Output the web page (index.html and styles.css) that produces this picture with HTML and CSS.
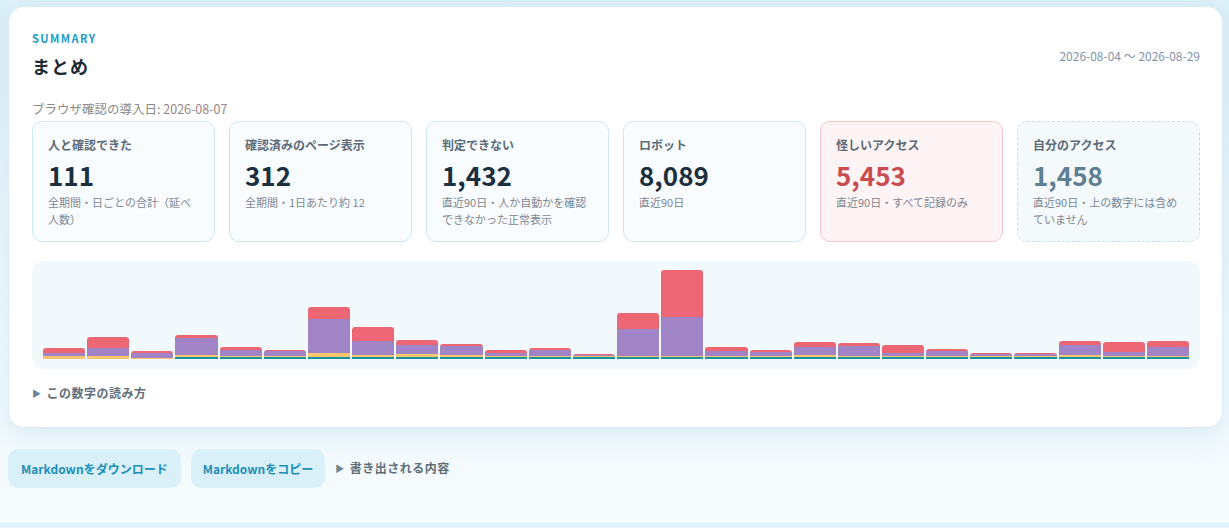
FILE: index.html
```html
<!DOCTYPE html>
<html lang="ja">

<head>
    <meta charset="UTF-8">
    <meta name="viewport" content="width=device-width, initial-scale=1.0">
    <title>まとめ</title>
    <link rel="stylesheet" href="styles.css">
</head>

<body>
    <div class="page">
        <section class="summary-card">
            <div class="summary-head">
                <div>
                    <div class="eyebrow">SUMMARY</div>
                    <h2>まとめ</h2>
                </div>
                <div class="range">2026-08-04 〜 2026-08-29</div>
            </div>

            <p class="since">ブラウザ確認の導入日: <span>2026-08-07</span></p>

            <div class="stats">
                <div class="stat">
                    <div class="stat-label">人と確認できた</div>
                    <div class="stat-value">111</div>
                    <div class="stat-note">全期間・日ごとの合計（延べ人数）</div>
                </div>
                <div class="stat">
                    <div class="stat-label">確認済みのページ表示</div>
                    <div class="stat-value">312</div>
                    <div class="stat-note">全期間・1日あたり約 12</div>
                </div>
                <div class="stat">
                    <div class="stat-label">判定できない</div>
                    <div class="stat-value">1,432</div>
                    <div class="stat-note">直近90日・人か自動かを確認できなかった正常表示</div>
                </div>
                <div class="stat">
                    <div class="stat-label">ロボット</div>
                    <div class="stat-value">8,089</div>
                    <div class="stat-note">直近90日</div>
                </div>
                <div class="stat stat-warn">
                    <div class="stat-label">怪しいアクセス</div>
                    <div class="stat-value">5,453</div>
                    <div class="stat-note">直近90日・すべて記録のみ</div>
                </div>
                <div class="stat stat-self">
                    <div class="stat-label">自分のアクセス</div>
                    <div class="stat-value">1,458</div>
                    <div class="stat-note">直近90日・上の数字には含めていません</div>
                </div>
            </div>

            <div class="chart" id="chart"></div>

            <details class="howto">
                <summary>この数字の読み方</summary>
            </details>
        </section>

        <div class="actions">
            <button class="btn">Markdownをダウンロード</button>
            <button class="btn">Markdownをコピー</button>
            <details class="howto export">
                <summary>書き出される内容</summary>
            </details>
        </div>
    </div>

    <script>
        // 1日ごとの内訳（px）: [人, 確認済み, 判定不可, 怪しい]
        const days = [
            [0, 3, 3, 5], [0, 3, 8, 11], [0, 1, 5, 2], [2, 2, 17, 3],
            [2, 1, 6, 3], [2, 1, 5, 1], [2, 4, 34, 12], [2, 2, 14, 14],
            [2, 3, 9, 5], [2, 2, 9, 2], [2, 1, 3, 3], [2, 1, 6, 2],
            [2, 1, 1, 1], [2, 1, 27, 16], [2, 1, 39, 47], [2, 1, 5, 4],
            [2, 1, 4, 2], [2, 2, 8, 5], [2, 1, 10, 3], [2, 1, 3, 8],
            [2, 1, 5, 2], [2, 1, 2, 1], [2, 1, 2, 1], [2, 2, 10, 4],
            [2, 1, 4, 10], [2, 1, 9, 6]
        ];
        const kinds = ['seg-human', 'seg-ok', 'seg-unknown', 'seg-bad'];
        const chart = document.getElementById('chart');

        days.forEach(day => {
            const bar = document.createElement('div');
            bar.className = 'bar';
            day.forEach((h, i) => {
                if (!h) return;
                const seg = document.createElement('div');
                seg.className = 'seg ' + kinds[i];
                seg.style.height = h + 'px';
                bar.appendChild(seg);
            });
            chart.appendChild(bar);
        });
    </script>
</body>

</html>
```

FILE: styles.css
```css
body {
    margin: 0;
    padding: 0;
    font-family: "Noto Sans CJK JP", "Noto Sans", sans-serif;
    background: #e3f3f9;
    color: #1c2a36;
}

.page {
    min-height: 522px;
    box-sizing: border-box;
    padding: 6px 6px 0 8px;
    background: linear-gradient(180deg, #dcf0f8 0%, #eef8fc 60%, #f6fbfd 100%);
}

.summary-card {
    background: #fff;
    border: 1px solid #d8eef7;
    border-radius: 16px;
    padding: 23px 22px 24px 23px;
    box-shadow: 0 8px 24px rgba(110, 180, 210, 0.18);
}

.summary-head {
    display: flex;
    justify-content: space-between;
    align-items: center;
}

.eyebrow {
    font-size: 11px;
    font-weight: bold;
    letter-spacing: 1.4px;
    color: #1c9cc9;
    line-height: 16px;
}

h2 {
    margin: 8px 0 0;
    font-size: 18px;
    line-height: 24px;
    font-weight: bold;
    letter-spacing: 1px;
}

.range {
    font-size: 12px;
    color: #7f95ae;
    margin-top: 2px;
}

.since {
    margin: 22px 0 3px;
    font-size: 12.5px;
    line-height: 18px;
    color: #8a8a8a;
}

.since span {
    color: #9c8482;
}

.stats {
    display: grid;
    grid-template-columns: repeat(6, 1fr);
    gap: 14px;
}

.stat {
    background: #f9fcfe;
    border: 1px solid #cde6ef;
    border-radius: 10px;
    padding: 15px 15px 13px;
}

.stat-label {
    font-size: 12px;
    line-height: 16px;
    font-weight: bold;
    color: #5b6b78;
}

.stat-value {
    margin-top: 6px;
    font-size: 26px;
    line-height: 32px;
    font-weight: bold;
    color: #1b2f3e;
}

.stat-note {
    margin-top: 3px;
    font-size: 11px;
    line-height: 17px;
    color: #7d8791;
}

.stat-warn {
    background: #fff4f5;
    border-color: #f6c5c9;
}

.stat-warn .stat-value {
    color: #c94c51;
}

.stat-self {
    background: #f4f9fc;
    border: 1px dashed #c6dfec;
}

.stat-self .stat-value {
    color: #5f7f92;
}

.chart {
    margin-top: 19px;
    height: 88px;
    padding: 10px 11px 10px 11px;
    background: #f2f9fd;
    border-radius: 12px;
    display: flex;
    align-items: flex-end;
    gap: 2px;
}

.bar {
    flex: 1;
    display: flex;
    flex-direction: column-reverse;
    border-radius: 3px 3px 0 0;
    overflow: hidden;
}

.seg-human {
    background: #17939f;
}

.seg-ok {
    background: #fdc56c;
}

.seg-unknown {
    background: #a184c6;
}

.seg-bad {
    background: #ec6773;
}

.howto {
    margin-top: 15px;
}

.howto summary {
    list-style: none;
    cursor: pointer;
    font-size: 12px;
    line-height: 18px;
    font-weight: bold;
    color: #5f6f7a;
    letter-spacing: 0.5px;
}

.howto summary::before {
    content: "▶";
    display: inline-block;
    font-size: 9px;
    color: #6f8594;
    margin-right: 5px;
    vertical-align: 1px;
}

.actions {
    margin-top: 21px;
    display: flex;
    align-items: center;
    gap: 10px;
}

.btn {
    font-family: inherit;
    background: #d9f0f8;
    border: none;
    border-radius: 10px;
    height: 39px;
    padding: 0 13px 0 13px;
    font-size: 12px;
    font-weight: bold;
    color: #1f8fb8;
    cursor: pointer;
}

.btn + .btn {
    padding: 0 12px;
}

.export {
    margin-top: 0;
}
```
